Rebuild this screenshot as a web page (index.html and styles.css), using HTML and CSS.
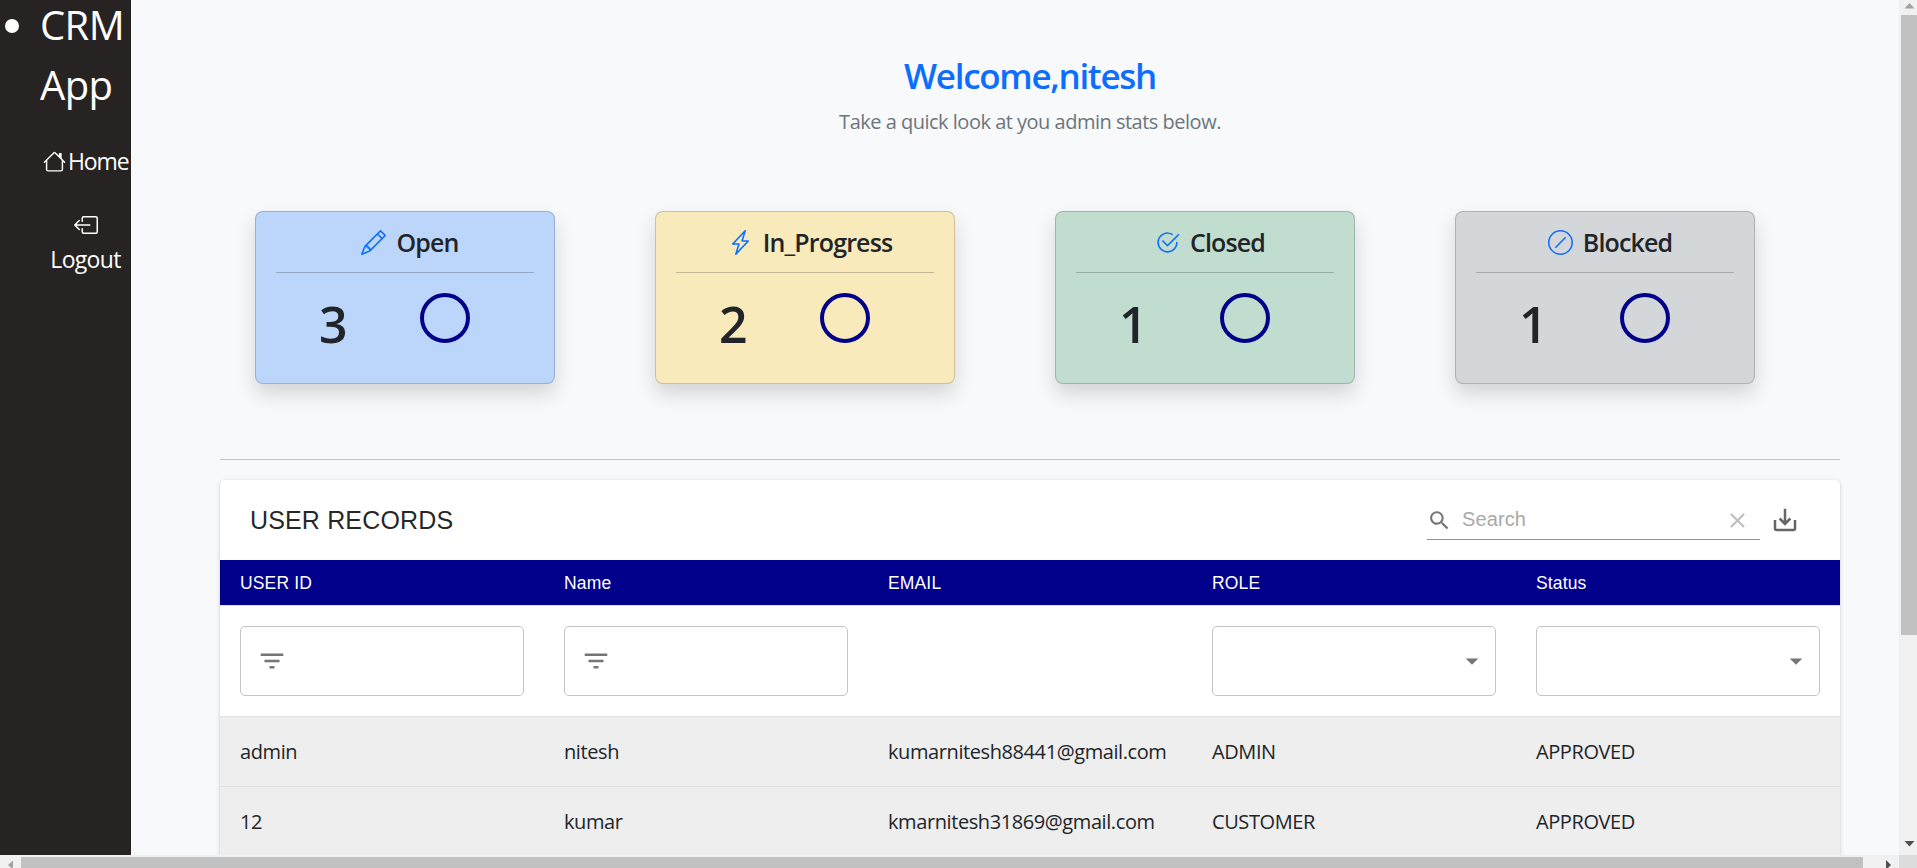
FILE: index.html
```
<!DOCTYPE html>
<html lang="en">
<head>
<meta charset="utf-8">
<title>CRM App</title>
<link rel="stylesheet" href="styles.css">
</head>
<body>
<svg class="defs" aria-hidden="true">
  <symbol id="filter" viewBox="0 0 24 24"><path d="M10 18h4v-2h-4v2zM3 6v2h18V6H3zm3 7h12v-2H6v2z"/></symbol>
  <symbol id="drop" viewBox="0 0 24 24"><path d="M7 10l5 5 5-5z"/></symbol>
</svg>
<div class="window">
  <aside class="sidebar">
    <div class="brand"><span class="bullet"></span><span class="brand-name">CRM<br>App</span></div>
    <a class="nav-home">
      <svg class="icon-home" viewBox="0 0 16 16"><path d="M8.707 1.5a1 1 0 0 0-1.414 0L.646 8.146a.5.5 0 0 0 .708.708L2 8.207V13.5A1.5 1.5 0 0 0 3.5 15h9a1.5 1.5 0 0 0 1.5-1.5V8.207l.646.647a.5.5 0 0 0 .708-.708L13 5.793V2.5a.5.5 0 0 0-.5-.5h-1a.5.5 0 0 0-.5.5v1.293zM13 7.207V13.5a.5.5 0 0 1-.5.5h-9a.5.5 0 0 1-.5-.5V7.207l5-5z"/></svg>
      <span>Home</span>
    </a>
    <a class="nav-logout">
      <svg class="icon-logout" viewBox="0 0 16 16"><path d="M6 12.5a.5.5 0 0 0 .5.5h8a.5.5 0 0 0 .5-.5v-9a.5.5 0 0 0-.5-.5h-8a.5.5 0 0 0-.5.5v2a.5.5 0 0 1-1 0v-2A1.5 1.5 0 0 1 6.5 2h8A1.5 1.5 0 0 1 16 3.5v9a1.5 1.5 0 0 1-1.5 1.5h-8A1.5 1.5 0 0 1 5 12.5v-2a.5.5 0 0 1 1 0z"/><path d="M.146 8.354a.5.5 0 0 1 0-.708l3-3a.5.5 0 1 1 .708.708L1.707 7.5H10.5a.5.5 0 0 1 0 1H1.707l2.147 2.146a.5.5 0 0 1-.708.708z"/></svg>
      <span>Logout</span>
    </a>
  </aside>

  <main class="main">
    <h3 class="welcome">Welcome,nitesh</h3>
    <p class="subtitle">Take a quick look at you admin stats below.</p>

    <section class="stats">
      <article class="card open">
        <h5 class="card-title">
          <svg viewBox="0 0 16 16"><path d="M12.146.146a.5.5 0 0 1 .708 0l3 3a.5.5 0 0 1 0 .708l-10 10a.5.5 0 0 1-.168.11l-5 2a.5.5 0 0 1-.65-.65l2-5a.5.5 0 0 1 .11-.168zM11.207 2.5 13.5 4.793 14.793 3.5 12.5 1.207zm1.586 3L10.5 3.207 4 9.707V10h.5a.5.5 0 0 1 .5.5v.5h.5a.5.5 0 0 1 .5.5v.5h.293zm-9.761 5.175-.106.106-1.528 3.821 3.821-1.528.106-.106A.5.5 0 0 1 5 12.5V12h-.5a.5.5 0 0 1-.5-.5V11h-.5a.5.5 0 0 1-.468-.325"/></svg>
          <span>Open</span>
        </h5>
        <div class="card-body"><span class="count">3</span><span class="ring"></span></div>
      </article>
      <article class="card progress">
        <h5 class="card-title">
          <svg viewBox="0 0 16 16"><path d="M11.251.068a.5.5 0 0 1 .227.58L9.677 6.5H13a.5.5 0 0 1 .364.843l-8 8.5a.5.5 0 0 1-.842-.49L6.323 9.5H3a.5.5 0 0 1-.364-.843l8-8.5a.5.5 0 0 1 .615-.09zM4.157 8.5H7a.5.5 0 0 1 .478.647L6.11 13.59l5.732-6.09H9a.5.5 0 0 1-.478-.647L9.89 2.41z"/></svg>
          <span>In_Progress</span>
        </h5>
        <div class="card-body"><span class="count">2</span><span class="ring"></span></div>
      </article>
      <article class="card closed">
        <h5 class="card-title">
          <svg viewBox="0 0 16 16"><path d="M2.5 8a5.5 5.5 0 0 1 8.25-4.764.5.5 0 0 0 .5-.866A6.5 6.5 0 1 0 14.5 8a.5.5 0 0 0-1 0 5.5 5.5 0 1 1-11 0z"/><path d="M15.354 3.354a.5.5 0 0 0-.708-.708L8 9.293 5.354 6.646a.5.5 0 1 0-.708.708l3 3a.5.5 0 0 0 .708 0z"/></svg>
          <span>Closed</span>
        </h5>
        <div class="card-body"><span class="count">1</span><span class="ring"></span></div>
      </article>
      <article class="card blocked">
        <h5 class="card-title">
          <svg viewBox="0 0 16 16"><path d="M8 15A7 7 0 1 1 8 1a7 7 0 0 1 0 14zm0 1A8 8 0 1 0 8 0a8 8 0 0 0 0 16z"/><path d="M11.354 4.646a.5.5 0 0 0-.708 0l-6 6a.5.5 0 0 0 .708.708l6-6a.5.5 0 0 0 0-.708z"/></svg>
          <span>Blocked</span>
        </h5>
        <div class="card-body"><span class="count">1</span><span class="ring"></span></div>
      </article>
    </section>

    <div class="divider"></div>

    <section class="records">
      <header class="toolbar">
        <h6 class="records-title">USER RECORDS</h6>
        <div class="search">
          <svg class="icon-search" viewBox="0 0 24 24"><path d="M15.5 14h-.79l-.28-.27C15.41 12.59 16 11.11 16 9.5 16 5.91 13.09 3 9.5 3S3 5.91 3 9.5 5.91 16 9.5 16c1.61 0 3.09-.59 4.23-1.57l.27.28v.79l5 4.99L20.49 19l-4.99-5zm-6 0C7.01 14 5 11.99 5 9.5S7.01 5 9.5 5 14 7.01 14 9.5 11.99 14 9.5 14z"/></svg>
          <span class="placeholder">Search</span>
          <svg class="icon-clear" viewBox="0 0 24 24"><path d="M19 6.41L17.59 5 12 10.59 6.41 5 5 6.41 10.59 12 5 17.59 6.41 19 12 13.41 17.59 19 19 17.59 13.41 12z"/></svg>
        </div>
        <svg class="icon-export" viewBox="0 0 24 24"><path d="M19 12v7H5v-7H3v7c0 1.1.9 2 2 2h14c1.1 0 2-.9 2-2v-7h-2zm-6 .67l2.59-2.58L17 11.5l-5 5-5-5 1.41-1.41L11 12.67V3h2z"/></svg>
      </header>
      <div class="row head"><span>USER ID</span><span>Name</span><span>EMAIL</span><span>ROLE</span><span>Status</span></div>
      <div class="row filters">
        <span><span class="field text"><svg><use href="#filter"/></svg></span></span>
        <span><span class="field text"><svg><use href="#filter"/></svg></span></span>
        <span></span>
        <span><span class="field select"><svg><use href="#drop"/></svg></span></span>
        <span><span class="field select"><svg><use href="#drop"/></svg></span></span>
      </div>
      <div class="row data"><span>admin</span><span>nitesh</span><span>kumarnitesh88441@gmail.com</span><span>ADMIN</span><span>APPROVED</span></div>
      <div class="row data"><span>12</span><span>kumar</span><span>kmarnitesh31869@gmail.com</span><span>CUSTOMER</span><span>APPROVED</span></div>
    </section>
  </main>

  <div class="vbar">
    <svg class="cap" viewBox="0 0 18 15"><path class="dim" d="M10.5 3l5 5.500h-10z"/></svg>
    <div class="vthumb"></div>
    <svg class="vend" viewBox="0 0 18 20"><path d="M5.500 6h10l-5 5.500z"/></svg>
  </div>
  <div class="hbar">
    <svg class="hcap" viewBox="0 0 21 13"><path class="dim" d="M13 5.500v9l-5-4.500z"/></svg>
    <div class="hthumb"></div>
    <svg class="hend" viewBox="0 0 36 13"><path d="M23 5v10l5-5z"/></svg>
  </div>
  <div class="corner"></div>
</div>
</body>
</html>
```
FILE: styles.css
```
* { box-sizing: border-box; }
body {
  margin: 0;
  font-family: "Open Sans", "Noto Sans", sans-serif;
  font-size: 20px;
  color: #212529;
  overflow: hidden;
}
h3, h5, h6, p { margin: 0; }
svg { display: block; fill: currentColor; flex: none; }
.defs { display: none; }

.window {
  display: grid;
  grid-template-columns: 131px 1fr 18px;
  grid-template-rows: 855px 13px;
  width: 1917px;
  height: 868px;
}

/* Sidebar */
.sidebar { background: #272323; color: #fff; overflow: hidden; font-size: 23px; line-height: 35px; }
.brand { display: flex; margin-top: -5px; padding-left: 5px; }
.bullet { width: 14px; height: 14px; margin: 24px 21px 0 0; border-radius: 50%; background: #fff; }
.brand-name { font-size: 40px; line-height: 60px; letter-spacing: -0.6px; }
.nav-home { display: flex; align-items: center; margin-top: 28px; padding-left: 43px; gap: 2px; letter-spacing: -1.1px; }
.nav-home span { padding-top: 1px; }
.icon-home { width: 23px; height: 23px; }
.nav-logout { display: flex; flex-direction: column; align-items: center; margin-top: 34px; padding-left: 40px; letter-spacing: -0.7px; }
.icon-logout { width: 24px; height: 24px; margin-bottom: 5px; }

/* Main column */
.main { background: #f8f9fb; padding: 55px 59px 0 89px; overflow: hidden; }
.welcome { font-size: 35px; line-height: 42px; font-weight: 600; letter-spacing: -1.3px; color: #0d6efd; text-align: center; }
.subtitle { margin-top: 10px; line-height: 30px; letter-spacing: -0.5px; color: #6c757d; text-align: center; }

.stats { display: grid; grid-template-columns: repeat(4, 300px); gap: 100px; margin-top: 74px; padding-left: 35px; }
.card {
  height: 173px;
  padding: 12px 20px 0;
  border: 1px solid rgba(0, 0, 0, 0.175);
  border-radius: 8px;
  box-shadow: 0 10px 20px rgba(0, 0, 0, 0.15);
}
.open { background-color: #bcd6fb; }
.progress { background-color: #f9eabb; }
.closed { background-color: #c1ddcf; }
.blocked { background-color: #d4d7da; }
.card-title {
  display: flex;
  justify-content: center;
  align-items: center;
  gap: 10px;
  height: 49px;
  padding: 0 0 12px 10px;
  border-bottom: 1px solid rgba(33, 37, 41, 0.25);
  font-size: 25px;
  line-height: 30px;
  font-weight: 600;
  letter-spacing: -0.85px;
}
.card-title svg { width: 25px; height: 25px; color: #0d6efd; }
.card-body { display: flex; padding: 20px 0 0 43px; }
.count { width: 101px; padding-top: 1px; font-size: 50px; line-height: 61px; font-weight: 600; }
.ring { width: 50px; height: 50px; border: 4px solid #00008b; border-radius: 50%; }

.divider { height: 1px; margin: 75px 0 20px; background: #c3c5c7; }

/* Records table */
.records {
  height: 500px;
  background: #fff;
  border-radius: 5px;
  box-shadow: 0 2px 1px -1px rgba(0, 0, 0, 0.2), 0 1px 2px rgba(0, 0, 0, 0.14), 0 1px 5px rgba(0, 0, 0, 0.12);
}
.toolbar { display: flex; align-items: center; height: 80px; padding: 0 40px 0 30px; font-family: "Liberation Sans", Arial, sans-serif; }
.records-title { flex: 1; font-size: 25px; font-weight: 400; letter-spacing: 0.15px; color: rgba(0, 0, 0, 0.87); }
.search { display: flex; align-items: center; width: 333px; height: 40px; padding-right: 10px; border-bottom: 1px solid #8f8f8f; }
.icon-search { width: 25px; height: 25px; margin-top: 1px; color: #757575; }
.placeholder { flex: 1; padding: 0 0 1px 10px; letter-spacing: 0.1px; color: #a9a9a9; }
.icon-clear { width: 25px; height: 25px; margin-top: 1px; color: #bdbdbd; }
.icon-export { width: 30px; height: 30px; margin-left: 10px; color: #666; }

.row { display: grid; grid-template-columns: repeat(5, 324px); align-items: center; border-bottom: 1px solid #e0e0e0; }
.row > span { padding: 0 20px; white-space: nowrap; }
.head { height: 46px; padding-top: 1px; background: #00008b; color: #fff; font-family: "Liberation Sans", Arial, sans-serif; font-size: 17.5px; letter-spacing: 0.15px; }
.filters { height: 111px; }
.field { display: flex; align-items: center; height: 70px; border: 1px solid #c4c4c4; border-radius: 5px; color: #757575; }
.field svg { width: 30px; height: 30px; }
.text { padding-left: 16px; }
.select { justify-content: flex-end; padding-right: 8px; }
.data { height: 70px; background: #eee; letter-spacing: -0.41px; }

/* Scrollbars */
.vbar, .hbar { display: flex; background: #f1f1f1; color: #505050; }
.vbar { grid-column: 3; grid-row: 1; flex-direction: column; }
.cap { width: 18px; height: 15px; }
.vthumb { height: 620px; margin-left: 2px; background: #c1c1c1; }
.vend { width: 18px; height: 20px; margin-top: auto; }
.hbar { grid-column: 1 / 3; grid-row: 2; }
.hcap { width: 21px; height: 13px; }
.hthumb { width: 1842px; margin-top: 2px; background: #c1c1c1; }
.hend { width: 36px; height: 13px; }
.dim { fill: #a3a3a3; }
.corner { background: #dcdcdc; }
```
